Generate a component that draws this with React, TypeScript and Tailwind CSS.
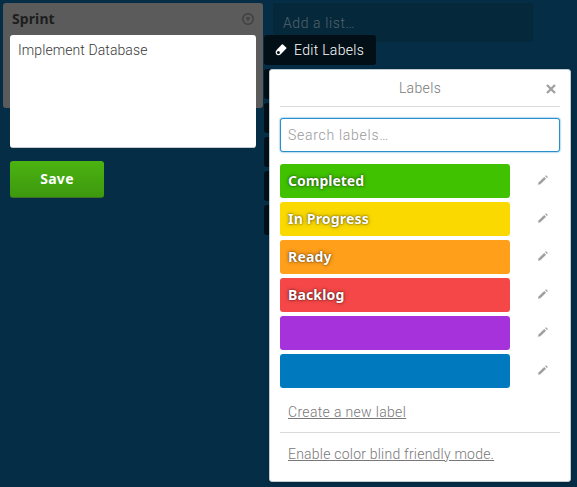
const labels = [
  { name: 'Completed', color: 'bg-[#40c200]', spacing: 'tracking-[0px]' },
  { name: 'In Progress', color: 'bg-[#fad900]', spacing: 'tracking-[0.2px]' },
  { name: 'Ready', color: 'bg-[#ff9f1a]', spacing: 'tracking-[0.2px]' },
  { name: 'Backlog', color: 'bg-[#f54747]', spacing: 'tracking-[0.15px]' },
  { name: '', color: 'bg-[#a632db]', spacing: '' },
  { name: '', color: 'bg-[#0079bf]', spacing: '' },
];

function TagIcon() {
  return (
    <svg width="12" height="12" viewBox="0 0 12 12" fill="none">
      <path d="M6.8 .6 Q7.4 0 8 .6 L11.2 3.5 Q11.8 4 11.3 4.6 L6 10 Q4.8 11.4 2.8 11.2 Q.6 10.8.6 8.6 Q.5 7 1.8 5.7Z" fill="white" />
      <circle cx="3.4" cy="8.4" r="1.5" fill="#020f17" />
    </svg>
  );
}

function PencilIcon() {
  return (
    <svg width="10" height="10" viewBox="0 0 10 10" fill="#a0a0a0">
      <path d="M0 9.8 .5 7.4 6.2 1.9 8.1 3.8 2.4 9.3Z" />
      <path d="M7 1.1 8 .2 9.9 2 8.9 3Z" />
    </svg>
  );
}

function Board() {
  return (
    <div className="flex items-start gap-[10px] p-[3px]">
      <div className="flex h-[105px] w-[260px] shrink-0 items-start justify-between rounded-[3px] bg-[#5b5b5b] pl-[9px] pr-[9px] pt-[7px]">
        <span className="font-['Noto_Sans',sans-serif] text-[14px] font-bold leading-[18px] tracking-[0.1px] text-[#1e1e1e]">Sprint</span>
        <svg className="mt-[3px]" width="12" height="12" viewBox="0 0 12 12" fill="none">
          <circle cx="6" cy="6" r="5.2" stroke="#404040" strokeWidth="1.5" />
          <path d="M3.7 4.2H8.3L6 8.2Z" fill="#404040" />
        </svg>
      </div>
      <div className="h-[39px] w-[260px] shrink-0 rounded-[3px] bg-[#05283b] pl-[10px] pt-[11px] text-[14px] font-light leading-[18px] tracking-[0.6px] text-[#51636b]">Add a list…</div>
    </div>
  );
}

function LabelsPopover() {
  return (
    <div className="absolute left-[269px] top-[69px] flex h-[413px] w-[302px] flex-col rounded-[3px] border border-[#c3cdd1] bg-white px-[10px] text-[14px] font-light text-[#787878] shadow-[0_1px_3px_rgba(0,0,0,0.2)]">
      <div className="relative h-[37px] shrink-0 border-b border-[#d6dadc] text-center leading-[37px] tracking-[0.35px]">
        Labels
        <svg className="absolute right-[4px] top-[14px]" width="10" height="10" viewBox="0 0 10 10" stroke="#a0a0a0" strokeWidth="2.3">
          <path d="M1 1 9 9M9 1 1 9" />
        </svg>
      </div>
      <input className="mt-[11px] h-[34px] w-full shrink-0 rounded-[3px] border border-[#298fca] bg-white px-[7px] tracking-[0.72px] shadow-[0_0_2px_#298fca] outline-none placeholder:text-[#999]" placeholder="Search labels…" />
      <div className="mt-[12px] flex flex-col gap-1">
        {labels.map((label, i) => (
          <div key={i} className="flex h-[34px] items-center">
            <div className={`h-[34px] w-[230px] rounded-[3px] px-2 font-['Noto_Sans',sans-serif] font-bold leading-[34px] text-white [text-shadow:0_0_2px_rgba(0,0,0,0.7),0_0_5px_rgba(0,0,0,0.3)] ${label.color} ${label.spacing}`}>{label.name}</div>
            <div className="mb-[2px] ml-[28px]"><PencilIcon /></div>
          </div>
        ))}
      </div>
      <div className="mt-[14px] h-[31px] border-b border-[#d6dadc] pl-2 leading-5 tracking-[0.33px] underline">Create a new label</div>
      <div className="mt-[11px] pl-2 leading-5 tracking-[0.22px] underline">Enable color blind friendly mode.</div>
    </div>
  );
}

export default function App() {
  return (
    <div className="relative h-[487px] w-[577px] overflow-hidden bg-[#052d46] font-[Roboto,sans-serif]">
      <Board />
      <div className="absolute left-[10px] top-[35px] flex w-[246px] flex-col items-start">
        <div className="h-[113px] w-full rounded-[3px] border-b border-[#c5cbce] bg-white px-2 pt-[6px] text-[14px] font-light leading-[19px] tracking-[0.09px] text-[#383838]">Implement Database</div>
        <button className="mt-[13px] h-[37px] w-[94px] rounded-[3px] border-b border-[#3f6f21] bg-linear-to-b from-[#4bb310] to-[#3d990f] pb-[2px] font-['Noto_Sans',sans-serif] text-[14px] font-bold tracking-[0.3px] text-white">Save</button>
      </div>
      <div className="absolute left-[264px] top-[35px] flex flex-col items-start gap-1">
        <div className="flex h-[30px] w-[112px] items-center rounded-[3px] bg-[#020f17] pl-[11px] text-[14px] font-light tracking-[0.3px] text-white">
          <TagIcon />
          <span className="ml-[7px]">Edit Labels</span>
        </div>
        <div className="h-[30px] w-[100px] rounded-[3px] bg-[#020f17]" />
        <div className="h-[30px] w-[100px] rounded-[3px] bg-[#020f17]" />
        <div className="h-[30px] w-[100px] rounded-[3px] bg-[#020f17]" />
        <div className="h-[30px] w-[100px] rounded-[3px] bg-[#020f17]" />
        <div className="h-[30px] w-[100px] rounded-[3px] bg-[#020f17]" />
      </div>
      <LabelsPopover />
    </div>
  );
}
